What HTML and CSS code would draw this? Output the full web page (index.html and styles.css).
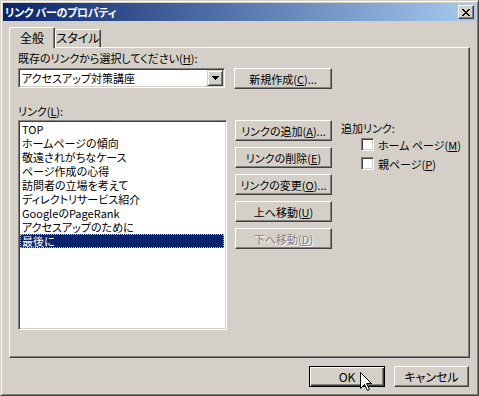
FILE: index.html
```html
<!DOCTYPE html>
<html lang="ja">
<head>
<meta charset="utf-8">
<title>リンク バーのプロパティ</title>
<link rel="stylesheet" href="styles.css">
</head>
<body>
<div class="window">
  <div class="titlebar">
    <span class="title">リンク バーのプロパティ</span>
    <div class="close">
      <svg width="8" height="7" viewBox="0 0 8 7" shape-rendering="crispEdges">
        <path fill="#000" d="M0 0h2v1h-2zM6 0h2v1h-2zM1 1h2v1h-2zM5 1h2v1h-2zM2 2h4v1h-4zM3 3h2v1h-2zM2 4h4v1h-4zM1 5h2v1h-2zM5 5h2v1h-2zM0 6h2v1h-2zM6 6h2v1h-2z"/>
      </svg>
    </div>
  </div>
  <div class="content">
    <div class="tabs">
      <div class="tab active">全般</div>
      <div class="tab">スタイル</div>
    </div>
    <div class="panel">
      <div class="label first">既存のリンクから選択してください(<u>H</u>):</div>
      <div class="row top-row">
        <div class="combo">
          <span class="combo-text">アクセスアップ対策講座</span>
          <span class="combo-btn">
            <svg width="7" height="4" viewBox="0 0 7 4" shape-rendering="crispEdges"><path fill="#000" d="M0 0h7v1h-7zM1 1h5v1h-5zM2 2h3v1h-3zM3 3h1v1h-1z"/></svg>
          </span>
        </div>
        <div class="btn new-btn">新規作成(<u>C</u>)...</div>
      </div>
      <div class="label second">リンク(<u>L</u>):</div>
      <div class="row main-row">
        <ul class="list">
          <li>TOP</li>
          <li>ホームページの傾向</li>
          <li>敬遠されがちなケース</li>
          <li>ページ作成の心得</li>
          <li>訪問者の立場を考えて</li>
          <li>ディレクトリサービス紹介</li>
          <li>GoogleのPageRank</li>
          <li>アクセスアップのために</li>
          <li class="selected">最後に</li>
        </ul>
        <div class="btn-col">
          <div class="btn">リンクの追加(<u>A</u>)...</div>
          <div class="btn">リンクの削除(<u>E</u>)</div>
          <div class="btn">リンクの変更(<u>O</u>)...</div>
          <div class="btn">上へ移動(<u>U</u>)</div>
          <div class="btn disabled">下へ移動(<u>D</u>)</div>
        </div>
        <div class="extra">
          <div class="extra-label">追加リンク:</div>
          <div class="check-row"><span class="checkbox"></span><span>ホーム ページ(<u>M</u>)</span></div>
          <div class="check-row"><span class="checkbox"></span><span>親ページ(<u>P</u>)</span></div>
        </div>
      </div>
    </div>
    <div class="footer">
      <div class="btn default">OK</div>
      <div class="btn">キャンセル</div>
    </div>
  </div>
  <svg class="cursor" width="12" height="20" viewBox="0 0 12 20">
    <path d="M0.5 0.5 L0.5 16.5 L4.5 12.5 L7.5 18.5 L9.5 17.5 L6.5 11.5 L11.5 11.5 Z" fill="#fff" stroke="#000" stroke-width="1" stroke-linejoin="miter"/>
  </svg>
</div>
</body>
</html>
```

FILE: styles.css
```css
* {
  box-sizing: border-box;
}

html, body {
  margin: 0;
  padding: 0;
}

body {
  width: 479px;
  height: 396px;
  overflow: hidden;
  background: #d4d0c8;
  font-family: "Noto Sans CJK JP", "Noto Sans", sans-serif;
  font-size: 11px;
  font-feature-settings: "palt";
  color: #000;
}

u {
  text-decoration: underline;
  text-underline-offset: 1px;
}

.window {
  position: relative;
  width: 479px;
  height: 396px;
  background: #d4d0c8;
  border: 1px solid;
  border-color: #d4d0c8 #404040 #404040 #d4d0c8;
  box-shadow: inset 1px 1px #fff, inset -1px -1px #808080;
  padding: 2px;
}

.titlebar {
  height: 18px;
  display: flex;
  align-items: center;
  justify-content: space-between;
  padding: 0 2px 0 2px;
  background: linear-gradient(to right, #0a246a, #a6caf0);
}

.title {
  color: #fff;
  font-weight: bold;
  line-height: 14px;
  letter-spacing: -0.3px;
}

.close {
  width: 16px;
  height: 14px;
  display: flex;
  align-items: center;
  justify-content: center;
  background: #d4d0c8;
  border: 1px solid;
  border-color: #fff #404040 #404040 #fff;
  box-shadow: inset -1px -1px #808080;
  padding-right: 1px;
}

.content {
  padding: 6px 7px 0 6px;
}

.tabs {
  display: flex;
  align-items: flex-end;
  height: 20px;
}

.tab {
  height: 18px;
  width: 46px;
  padding: 0;
  text-align: center;
  line-height: 16px;
  font-size: 12px;
  background: #d4d0c8;
  border-top: 1px solid #fff;
  border-left: 1px solid #fff;
  border-right: 1px solid #404040;
  box-shadow: inset -1px 0 #808080;
  border-top-left-radius: 2px;
  border-top-right-radius: 2px;
}

.tab.active {
  position: relative;
  z-index: 1;
  height: 21px;
  margin-bottom: -1px;
  line-height: 19px;
}

.panel {
  width: 461px;
  height: 311px;
  border: 1px solid;
  border-color: #fff #404040 #404040 #fff;
  box-shadow: inset -1px -1px #808080;
  padding: 3px 0 0 8px;
}

.label {
  line-height: 14px;
  height: 14px;
}

.row {
  display: flex;
  align-items: flex-start;
}

.top-row {
  margin-top: 3px;
}

.combo {
  width: 207px;
  height: 20px;
  background: #fff;
  border: 1px solid;
  border-color: #808080 #fff #fff #808080;
  box-shadow: inset 1px 1px #404040, inset -1px -1px #d4d0c8;
  padding: 2px 2px 2px 3px;
  display: flex;
  align-items: center;
  justify-content: space-between;
}

.combo-text {
  line-height: 14px;
}

.combo-btn {
  width: 16px;
  height: 16px;
  margin-right: -1px;
  display: flex;
  align-items: center;
  justify-content: center;
  background: #d4d0c8;
  border: 1px solid;
  border-color: #d4d0c8 #404040 #404040 #d4d0c8;
  box-shadow: inset 1px 1px #fff, inset -1px -1px #808080;
}

.btn {
  height: 21px;
  display: flex;
  align-items: center;
  justify-content: center;
  background: #d4d0c8;
  border: 1px solid;
  border-color: #fff #404040 #404040 #fff;
  box-shadow: inset -1px -1px #808080;
  line-height: 14px;
  white-space: nowrap;
}

.new-btn {
  width: 98px;
  margin-left: 9px;
}

.second {
  margin-top: 15px;
}

.main-row {
  margin-top: 2px;
}

.list {
  list-style: none;
  margin: 0;
  width: 209px;
  height: 210px;
  background: #fff;
  border: 1px solid;
  border-color: #808080 #fff #fff #808080;
  box-shadow: inset 1px 1px #404040, inset -1px -1px #d4d0c8;
  padding: 1px 2px 2px 1px;
}

.list li {
  height: 14px;
  line-height: 14px;
  padding-left: 2px;
  white-space: nowrap;
}

.list li.selected {
  background: #0a246a;
  color: #fff;
  outline: 1px dotted #c8c070;
  outline-offset: -1px;
}

.btn-col {
  display: flex;
  flex-direction: column;
  gap: 6px;
  width: 97px;
  margin-left: 8px;
}

.btn.disabled {
  color: #808080;
  text-shadow: 1px 1px #fff;
}

.extra {
  margin-left: 9px;
  padding-top: 1px;
}

.extra-label {
  line-height: 14px;
  height: 14px;
}

.check-row {
  display: flex;
  align-items: center;
  height: 19px;
  padding-left: 20px;
  gap: 4px;
  line-height: 14px;
}

.checkbox {
  width: 13px;
  height: 13px;
  background: #fff;
  border: 1px solid;
  border-color: #808080 #fff #fff #808080;
  box-shadow: inset 1px 1px #404040, inset -1px -1px #d4d0c8;
}

.footer {
  display: flex;
  justify-content: flex-end;
  gap: 9px;
  margin-top: 8px;
}

.footer .btn {
  width: 75px;
  font-size: 12px;
}

.btn.default {
  width: 76px;
  border: 1px solid #000;
  box-shadow: inset 1px 1px #fff, inset -1px -1px #404040, inset -2px -2px #808080;
}

.cursor {
  position: absolute;
  left: 359px;
  top: 371px;
}
```
